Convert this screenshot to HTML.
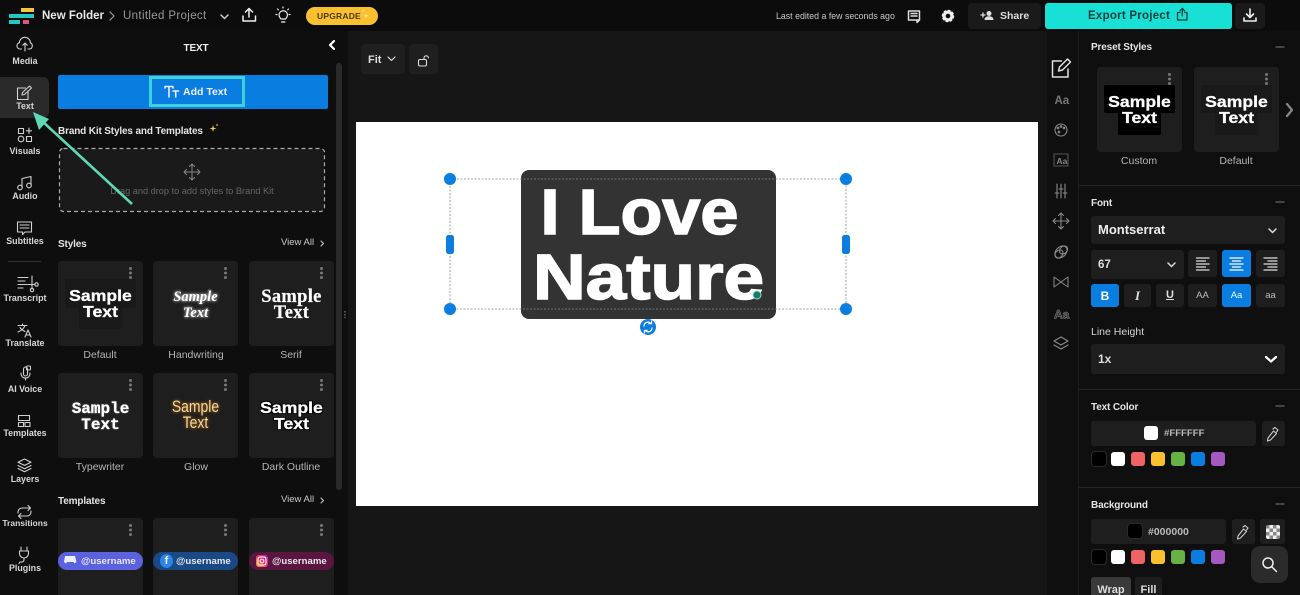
<!DOCTYPE html>
<html><head><meta charset="utf-8"><style>
html,body{margin:0;padding:0;width:1300px;height:595px;overflow:hidden;background:#161617}
body{position:relative;font-family:"Liberation Sans","Noto Sans CJK JP",sans-serif;color:#ddd}
.b,.t{position:absolute}
.t{white-space:nowrap;line-height:14px;height:14px}
.c{text-align:center;transform:translateX(-50%)}
.rl{font-size:8.9px;font-weight:700;color:#d8d8d8;left:25px;transform:translateX(-50%)}
.h{font-size:10px;letter-spacing:-.15px;font-weight:700;color:#e4e4e4;margin-top:1.5px}
.lb{font-size:10.5px;color:#b5b5b5;transform:translateX(-50%)}
.card{position:absolute;width:85px;height:85px;background:#1e1e1f;border-radius:4px}
.s{position:absolute;left:0;width:85px;text-align:center;white-space:nowrap;color:#fff;font-weight:700;font-size:16px;line-height:16px;top:26px;transform:scaleX(1.1);-webkit-text-stroke:.3px #fff}
.dots{position:absolute;right:11px;top:6px;width:3px;height:3px;background:#777;border-radius:50%;box-shadow:0 4.5px #777,0 9px #777}
.f{position:absolute;background:#1e1e1f;border-radius:3px}
.blue{background:#0a7ee0}
.sw{position:absolute;width:14px;height:14px;border-radius:3px}
.pill{position:absolute;left:0;width:85px;height:18px;top:34px;border-radius:9px;font-size:9.6px;font-weight:700;line-height:19px;color:#e8e8f0;white-space:nowrap}
.big{position:absolute;left:0;width:255px;text-align:center;color:#fff;font-weight:700;font-size:64px;line-height:65px;white-space:nowrap;-webkit-text-stroke:1.5px #fff}
</style></head><body>

<!-- regions -->
<div class="b" style="left:0;top:0;width:1300px;height:31px;background:#0c0c0d"></div>
<div class="b" style="left:0;top:31px;width:348px;height:564px;background:#0e0e0f"></div>
<div class="b" style="left:1047px;top:31px;width:253px;height:564px;background:#0f0f10"></div>
<div class="b" style="left:1078px;top:31px;width:1px;height:564px;background:#1c1c1d"></div>
<div class="b" style="left:356px;top:122px;width:682px;height:384px;background:#fff"></div>

<!-- top bar -->
<div class="b" style="left:21px;top:8px;width:13px;height:4px;background:#f3c63a"></div>
<div class="b" style="left:9px;top:14px;width:25px;height:4px;background:#25c8c0"></div>
<div class="b" style="left:9px;top:20px;width:11px;height:4px;background:#25c8c0"></div>
<div class="b" style="left:23px;top:20px;width:6px;height:4px;background:#e0527f"></div>
<div class="t" style="left:42px;top:9px;font-size:11.5px;font-weight:700;color:#e8e8e8">New Folder</div>
<div class="t" style="left:123px;top:9px;font-size:11.5px;color:#999;letter-spacing:.35px">Untitled Project</div>
<div class="b" style="left:306px;top:7px;width:72px;height:18px;background:#fbc02d;border-radius:9px"></div>
<div class="t" style="left:317px;top:9px;font-size:8.5px;font-weight:700;color:#4a3a08;letter-spacing:.2px">UPGRADE</div>
<div class="t" style="left:776px;top:9px;font-size:8.8px;color:#c8c8c8">Last edited a few seconds ago</div>
<div class="b" style="left:968px;top:3px;width:73px;height:26px;background:#1a1a1b;border-radius:4px"></div>
<div class="t" style="left:1000px;top:9px;font-size:10.5px;font-weight:700;color:#ddd">Share</div>
<div class="b" style="left:1045px;top:3px;width:187px;height:26px;background:#19e0d4;border-radius:3px"></div>
<div class="t" style="left:1088px;top:9px;font-size:11.5px;font-weight:700;color:#083f3f;letter-spacing:.25px">Export Project</div>
<div class="b" style="left:1235px;top:3px;width:30px;height:26px;background:#1a1a1b;border-radius:4px"></div>

<!-- left rail -->
<div class="b" style="left:0;top:77px;width:49px;height:41px;background:#2a2a2b;border-radius:0 6px 6px 0"></div>
<div class="b" style="left:8px;top:261px;width:33px;height:1px;background:#333"></div>
<div class="t rl" style="top:54px">Media</div>
<div class="t rl" style="top:99px">Text</div>
<div class="t rl" style="top:144px">Visuals</div>
<div class="t rl" style="top:189px">Audio</div>
<div class="t rl" style="top:234px">Subtitles</div>
<div class="t rl" style="top:291px">Transcript</div>
<div class="t rl" style="top:336px">Translate</div>
<div class="t rl" style="top:382px">AI Voice</div>
<div class="t rl" style="top:426px">Templates</div>
<div class="t rl" style="top:472px">Layers</div>
<div class="t rl" style="top:516px;font-size:8.5px">Transitions</div>
<div class="t rl" style="top:561px">Plugins</div>

<!-- left panel -->
<div class="t c h" style="left:196px;top:40px;color:#eee">TEXT</div>
<div class="b" style="left:336px;top:63px;width:6px;height:427px;background:#2a2a2b;border-radius:3px"></div>
<div class="b" style="left:58px;top:75px;width:270px;height:34px;background:#0a7ee0;border-radius:2px"></div>
<div class="b" style="left:149px;top:76px;width:90px;height:25px;border:3px solid #3fd0dc"></div>
<div class="t" style="left:183px;top:85px;font-size:10.5px;font-weight:700;color:#eef">Add Text</div>
<div class="t h" style="left:58px;top:123px">Brand Kit Styles and Templates</div>
<div class="b" style="left:60px;top:149px;width:264px;height:62px;background:#1a1a1b;border-radius:4px"></div>
<div class="t c" style="left:192px;top:184px;font-size:9.2px;color:#666">Drag and drop to add styles to Brand Kit</div>
<div class="t h" style="left:58px;top:236px">Styles</div>
<div class="t" style="left:281px;top:236px;font-size:9.5px;color:#ccc">View All</div>
<div class="t h" style="left:58px;top:493px">Templates</div>
<div class="t" style="left:281px;top:493px;font-size:9.5px;color:#ccc">View All</div>

<div class="card" style="left:58px;top:261px"><div class="b" style="left:7px;top:18px;width:71px;height:29px;background:#191919"></div><div class="b" style="left:21px;top:47px;width:43px;height:21px;background:#191919"></div><div class="dots"></div><div class="s" style="top:28px">Sample<br>Text</div></div>
<div class="card" style="left:153px;top:261px"><div class="dots"></div><div class="s" style="font-family:'Liberation Serif',serif;font-style:italic;font-size:14.5px;top:28px;line-height:16px;text-shadow:0 0 3px #fff;transform:none;-webkit-text-stroke:0">Sample<br>Text</div></div>
<div class="card" style="left:249px;top:261px"><div class="dots"></div><div class="s" style="font-family:'Liberation Serif',serif;font-size:18.5px;letter-spacing:.3px;top:28px;transform:none;-webkit-text-stroke:.2px #fff">Sample<br>Text</div></div>
<div class="t lb" style="left:100px;top:348px">Default</div>
<div class="t lb" style="left:196px;top:348px">Handwriting</div>
<div class="t lb" style="left:291px;top:348px">Serif</div>

<div class="card" style="left:58px;top:373px"><div class="dots"></div><div class="s" style="font-family:'Liberation Mono',monospace;font-size:16px;top:28px;transform:none;text-shadow:0 0 2px #666">Sample<br>Text</div></div>
<div class="card" style="left:153px;top:373px"><div class="dots"></div><div class="s" style="font-weight:400;font-size:17px;color:#f5d8a0;top:26px;transform:scaleX(.82);-webkit-text-stroke:0;text-shadow:0 0 4px #c87a10">Sample<br>Text</div></div>
<div class="card" style="left:249px;top:373px"><div class="dots"></div><div class="s" style="top:28px;text-shadow:1px 1px 0 #000,-1px 1px 0 #000,1px -1px 0 #000,-1px -1px 0 #000">Sample<br>Text</div></div>
<div class="t lb" style="left:100px;top:460px">Typewriter</div>
<div class="t lb" style="left:196px;top:460px">Glow</div>
<div class="t lb" style="left:291px;top:460px">Dark Outline</div>

<div class="card" style="left:58px;top:518px;height:77px;border-radius:4px 4px 0 0"><div class="dots"></div><div class="pill" style="background:#5a62e0;text-indent:23px">@username</div></div>
<div class="card" style="left:153px;top:518px;height:77px;border-radius:4px 4px 0 0"><div class="dots"></div><div class="pill" style="background:#1a4a85;text-indent:23px">@username</div><div class="b" style="left:7px;top:36px;width:13px;height:14px;border-radius:50%;background:#2a86e8;color:#fff;font-size:11px;font-weight:700;line-height:15px;text-align:center">f</div></div>
<div class="card" style="left:249px;top:518px;height:77px;border-radius:4px 4px 0 0"><div class="dots"></div><div class="pill" style="background:#5a1540;text-indent:23px">@username</div><div class="b" style="left:7px;top:37px;width:12px;height:12px;border-radius:3px;background:linear-gradient(45deg,#f9b233,#e8306e 55%,#a02cc0)"></div></div>

<!-- canvas toolbar -->
<div class="b" style="left:361px;top:44px;width:44px;height:30px;background:#1f1f20;border-radius:4px"></div>
<div class="t" style="left:368px;top:53px;font-size:11px;font-weight:700;color:#ddd">Fit</div>
<div class="b" style="left:409px;top:44px;width:29px;height:30px;background:#1f1f20;border-radius:4px"></div>

<!-- text object -->
<div class="b" style="left:521px;top:170px;width:255px;height:149px;background:#333;border-radius:8px;overflow:hidden">
<div class="big" style="top:10px;transform:translateX(-9px) scaleX(1.07)">I Love</div>
<div class="big" style="top:75px;transform:scaleX(1.14)">Nature</div>
</div>

<!-- right panel -->
<div class="t h" style="left:1091px;top:39px">Preset Styles</div>
<div class="card" style="left:1097px;top:67px"><div class="b" style="left:7px;top:18px;width:71px;height:28px;background:#000;border-radius:2px"></div><div class="b" style="left:21px;top:46px;width:43px;height:22px;background:#000;border-radius:2px"></div><div class="dots"></div><div class="s" style="top:28px">Sample<br>Text</div></div>
<div class="card" style="left:1194px;top:67px"><div class="b" style="left:7px;top:18px;width:71px;height:28px;background:#191919"></div><div class="b" style="left:21px;top:46px;width:43px;height:22px;background:#191919"></div><div class="dots"></div><div class="s" style="top:28px">Sample<br>Text</div></div>
<div class="t lb" style="left:1139px;top:154px">Custom</div>
<div class="t lb" style="left:1236px;top:154px">Default</div>
<div class="b" style="left:1079px;top:185px;width:221px;height:1px;background:#252526"></div>
<div class="t h" style="left:1091px;top:195px">Font</div>
<div class="f" style="left:1091px;top:216px;width:194px;height:28px"></div>
<div class="t" style="left:1098px;top:223px;font-size:13px;font-weight:700;color:#eee">Montserrat</div>
<div class="f" style="left:1091px;top:250px;width:93px;height:29px"></div>
<div class="t" style="left:1098px;top:258px;font-size:11.5px;font-weight:700;color:#ddd">67</div>
<div class="f" style="left:1188px;top:250px;width:29px;height:27px"></div>
<div class="f blue" style="left:1222px;top:250px;width:29px;height:27px"></div>
<div class="f" style="left:1256px;top:250px;width:29px;height:27px"></div>
<div class="f blue" style="left:1091px;top:284px;width:28px;height:23px;color:#fff;font-weight:700;font-size:12px;line-height:24px;text-align:center">B</div>
<div class="f" style="left:1124px;top:284px;width:27px;height:23px;color:#ddd;font-weight:700;font-style:italic;font-size:13px;line-height:24px;text-align:center;font-family:'Liberation Serif',serif">I</div>
<div class="f" style="left:1156px;top:284px;width:28px;height:23px;color:#ddd;font-weight:700;font-size:11px;line-height:23px;text-align:center;text-decoration:underline">U</div>
<div class="f" style="left:1188px;top:284px;width:29px;height:23px;color:#bbb;font-size:9.5px;line-height:23px;text-align:center">AA</div>
<div class="f blue" style="left:1222px;top:284px;width:29px;height:23px;color:#dff;font-size:9.5px;line-height:23px;text-align:center">Aa</div>
<div class="f" style="left:1256px;top:284px;width:29px;height:23px;color:#bbb;font-size:9.5px;line-height:23px;text-align:center">aa</div>
<div class="t h" style="left:1091px;top:323.5px;font-weight:400;font-size:10.5px;letter-spacing:0;color:#d5d5d5">Line Height</div>
<div class="f" style="left:1091px;top:344px;width:194px;height:30px"></div>
<div class="t" style="left:1098px;top:352px;font-size:12px;font-weight:700;color:#ddd">1x</div>
<div class="b" style="left:1079px;top:389px;width:221px;height:1px;background:#252526"></div>
<div class="t h" style="left:1091px;top:399px">Text Color</div>
<div class="f" style="left:1091px;top:421px;width:165px;height:25px"></div>
<div class="sw" style="left:1144px;top:426px;background:#fff"></div>
<div class="t" style="left:1164px;top:427px;font-size:9.6px;font-weight:700;color:#bbb">#FFFFFF</div>
<div class="f" style="left:1262px;top:421px;width:23px;height:25px"></div>
<div class="sw" style="left:1092px;top:452px;background:#000;box-shadow:0 0 0 1px #2a2a2a"></div>
<div class="sw" style="left:1111px;top:452px;background:#fff"></div>
<div class="sw" style="left:1131px;top:452px;background:#ee6464"></div>
<div class="sw" style="left:1151px;top:452px;background:#fbc02d"></div>
<div class="sw" style="left:1171px;top:452px;background:#66b245"></div>
<div class="sw" style="left:1191px;top:452px;background:#0a7ee0"></div>
<div class="sw" style="left:1211px;top:452px;background:#a558c0"></div>
<div class="b" style="left:1079px;top:487px;width:221px;height:1px;background:#252526"></div>
<div class="t h" style="left:1091px;top:497px">Background</div>
<div class="f" style="left:1091px;top:519px;width:135px;height:25px"></div>
<div class="sw" style="left:1128px;top:524px;background:#000;box-shadow:0 0 0 1px #2a2a2a"></div>
<div class="t" style="left:1148px;top:525px;font-size:10.5px;font-weight:700;color:#bbb">#000000</div>
<div class="f" style="left:1232px;top:519px;width:23px;height:25px"></div>
<div class="f" style="left:1260px;top:519px;width:25px;height:25px"></div>
<div class="b" style="left:1266px;top:525px;width:14px;height:14px;border-radius:2px;background:repeating-conic-gradient(#eee 0 25%,#888 0 50%) 0 0/7px 7px"></div>
<div class="sw" style="left:1092px;top:550px;background:#000;box-shadow:0 0 0 1px #2a2a2a"></div>
<div class="sw" style="left:1111px;top:550px;background:#fff"></div>
<div class="sw" style="left:1131px;top:550px;background:#ee6464"></div>
<div class="sw" style="left:1151px;top:550px;background:#fbc02d"></div>
<div class="sw" style="left:1171px;top:550px;background:#66b245"></div>
<div class="sw" style="left:1191px;top:550px;background:#0a7ee0"></div>
<div class="sw" style="left:1211px;top:550px;background:#a558c0"></div>
<div class="f" style="left:1091px;top:577px;width:40px;height:18px;background:#3a3a3b;font-size:11px;font-weight:700;color:#ddd;text-align:center;line-height:27px;border-radius:3px 3px 0 0;overflow:hidden">Wrap</div>
<div class="f" style="left:1135px;top:577px;width:27px;height:18px;font-size:11px;font-weight:700;color:#ddd;text-align:center;line-height:27px;border-radius:3px 3px 0 0;overflow:hidden">Fill</div>
<div class="b" style="left:1251px;top:546px;width:37px;height:37px;background:#2b2b2c;border-radius:9px"></div>

<!-- icons & overlays -->
<svg class="b" style="left:0;top:0" width="1300" height="595" viewBox="0 0 1300 595" fill="none" stroke-linecap="round" stroke-linejoin="round">
<!-- topbar icons -->
<g stroke="#999" stroke-width="1.2"><path d="M110 12l4 4-4 4"/></g>
<g stroke="#ccc" stroke-width="1.5"><path d="M221 15l3.500 3.500 3.500-3.500"/></g>
<g stroke="#eee" stroke-width="1.5"><path d="M249 17V9M245.500 12l3.500-3.500 3.500 3.500M243 16v5h12.500v-5"/></g>
<g stroke="#eee" stroke-width="1.200"><path d="M281 19c-.8-1-2-2-2-4a4.200 4.200 0 0 1 8.500 0c0 2-1.200 3-2 4zM281.500 22h3.500M283 7v1M277.500 9l.8.8M288.500 9l-.8.8M276 14.500h1M289 14.500h1"/></g>
<path d="M366 13l.7 2 2 .7-2 .7-.7 2-.7-2-2-.7 2-.7z" fill="#ffe98a"/>
<path d="M363 9l.4 1.200 1.200.4-1.200.4-.4 1.200-.4-1.200-1.200-.4 1.200-.4z" fill="#ffe98a"/>
<g stroke="#ddd" stroke-width="1.500"><path d="M908.500 11h11v9h-11zM911 13.500h6M911 16h6M917 20v2.500l2.500-2.500"/></g>
<circle cx="948" cy="16" r="3.800" stroke="#eee" stroke-width="3"/>
<circle cx="948" cy="16" r="5.500" stroke="#eee" stroke-width="1.500" stroke-dasharray="2 2.300"/>
<g fill="#ddd"><circle cx="989" cy="13.500" r="2.500"/><path d="M984.500 20c0-2.800 2-3.800 4.500-3.800s4.500 1 4.500 3.800z"/></g>
<path d="M981 15h4M983 13v4" stroke="#ddd" stroke-width="1.300"/>
<g stroke="#083f3f" stroke-width="1.300"><path d="M1180 12.500h-2.500v7.500h9.500v-7.500h-2.500M1182.300 16V9M1180 10.800l2.300-2.300 2.300 2.300"/></g>
<g stroke="#eee" stroke-width="1.600"><path d="M1250 9v8M1246.500 14l3.500 3.500 3.500-3.500M1244 18v3h12v-3"/></g>
<!-- rail icons -->
<g stroke="#d0d0d0" stroke-width="1.100">
<path d="M21.500 49H20a3.200 3.200 0 0 1-.6-6.300 5.500 5.500 0 0 1 11 .2 3.200 3.200 0 0 1-.9 6.100H28M25 51v-8M22.800 45.200l2.200-2.200 2.200 2.200"/>
<path d="M28 91v8.500H17.500V88h8M22 95l.5-2.500 7-6.500 2 2-7 6.500z"/>
<rect x="18.500" y="128.500" width="5" height="5"/><path d="M29 128v5.500M26.500 130.800h5"/><circle cx="21" cy="139" r="2.800"/><rect x="26.500" y="136.500" width="5" height="5"/>
<path d="M22 187v-8.500l9-2v8.500"/><circle cx="20" cy="187.500" r="2.300"/><circle cx="29" cy="185.500" r="2.300"/>
<path d="M17.500 222h14v10h-6.500l-2.500 2.500v-2.500h-5zM20 225h9M20 228h9"/>
<path d="M18 277.500h10M18 281h7M18 284.500h9M18 288h5M32 276v13"/><circle cx="32" cy="290" r="1.700"/><circle cx="36.500" cy="284.500" r="1.700"/><path d="M28 284.500h7"/>
<path d="M18 325.500h9M22.500 324v1.500M25 325.500c-1 3-3.500 5-7 6.500M20 327.500c1 2 3 3 5 4M25 337l3-7 3 7M26 335h4"/>
<path d="M23.500 369a2 2 0 0 1 4 0v5a2 2 0 0 1-4 0zM21 373c0 3.500 2 5 4.500 5s4.500-1.500 4.500-5M25.500 378v2"/><rect x="26.500" y="366" width="4" height="4" rx="1"/>
<rect x="18.500" y="415.500" width="11" height="5"/><rect x="18.500" y="422.500" width="5" height="4"/><rect x="25" y="422.500" width="5" height="4"/>
<path d="M24.500 459l6.500 3.200-6.500 3.200-6.500-3.200zM18 465.500l6.500 3.200 6.500-3.200M18 468.500l6.500 3.200 6.500-3.200"/>
<path d="M18 513v-1a4 4 0 0 1 4-4h8.500M28 505.500l2.500 2.500-2.500 2.500M31 511v1a4 4 0 0 1-4 4h-8.500M21 513.500l-2.500 2.500 2.500 2.500"/>
<path d="M21 551v-4M27 551v-4M19.500 551h9v2.500a4.500 4.500 0 0 1-9 0zM24 558v1.500c0 1.500-1 2.500-2.500 2.500H20l-1 1.500"/>
</g>
<path d="M334 41l-4 4 4 4" stroke="#fff" stroke-width="2.200"/>
<!-- add text icon -->
<g stroke="#eef" stroke-width="1.600"><path d="M165 88v-1.500h8V88M169 86.500V97M173 91h5.500M175.700 91v6"/></g>
<path d="M213 125l.8 2.700 2.700.8-2.700.8-.8 2.700-.8-2.700-2.700-.8 2.700-.8zM217 123.500l.4 1.100 1.100.4-1.100.4-.4 1.100-.4-1.100-1.100-.4 1.100-.4z" fill="#f0d060"/>
<rect x="59.500" y="148.500" width="265" height="63" rx="4" stroke="#aaa" stroke-width="1.200" stroke-dasharray="4 3" stroke-linecap="butt"/>
<g stroke="#888" stroke-width="1"><path d="M192 164v16M184 172h16M189.500 166.500l2.500-2.500 2.500 2.500M189.500 177.500l2.500 2.500 2.500-2.500M186.500 169.500l-2.500 2.500 2.500 2.500M197.500 169.500l2.500 2.500-2.500 2.500"/></g>
<g stroke="#ccc" stroke-width="1"><path d="M321 241l2.500 2.500-2.500 2.500M321 498l2.500 2.500-2.500 2.500"/></g>
<!-- discord -->
<path d="M65 556h10l1.500 6-2 1.500-1-1.500h-6.500l-1 1.500-2-1.500z" fill="#eef"/>
<rect x="258" y="557" width="8" height="8" rx="2" stroke="#fff" stroke-width="1"/><circle cx="262" cy="561" r="1.800" stroke="#fff" stroke-width="1"/>
<!-- canvas -->
<path d="M388 57l3.500 3.500 3.500-3.500" stroke="#ddd" stroke-width="1.200"/>
<g stroke="#ddd" stroke-width="1.100"><rect x="418.500" y="59.500" width="8" height="6.500" rx="1.500"/><path d="M424 59.500v-1.500a2.200 2.200 0 0 1 4.400 0"/></g>
<path d="M345 311v7" stroke="#555" stroke-width="2" stroke-dasharray="1.500 1.500" stroke-linecap="butt"/>
<!-- selection -->
<rect x="450" y="179" width="396" height="130" stroke="#888" stroke-width=".8" stroke-dasharray="2 1.500" stroke-linecap="butt"/>
<g fill="#0a7ee0"><circle cx="450" cy="179" r="6"/><circle cx="846" cy="179" r="6"/><circle cx="450" cy="309" r="6"/><circle cx="846" cy="309" r="6"/><rect x="446" y="235" width="8" height="19" rx="2.500"/><rect x="842" y="235" width="8" height="19" rx="2.500"/><circle cx="648" cy="327" r="8"/></g>
<path d="M644 326a4 4 0 0 1 7-2.500M652 328a4 4 0 0 1-7 2.500M651.500 321v2.700h-2.700M644.500 333v-2.700h2.700" stroke="#fff" stroke-width="1.200"/>
<circle cx="757" cy="295" r="4" fill="#1a7a6a" stroke="#8fdccb" stroke-width="1"/>
<!-- right rail -->
<g stroke="#e0e0e0" stroke-width="1.500"><path d="M1068 69v8h-15.500v-16h9M1058.500 71l1-4 8-8 3 3-8 8z"/></g>
<g stroke="#888" stroke-width="1.100">
<circle cx="1061" cy="130" r="6"/><circle cx="1058" cy="128" r=".8"/><circle cx="1061" cy="126.500" r=".8"/><circle cx="1064" cy="128" r=".8"/><circle cx="1059" cy="132" r=".8"/>
<rect x="1054" y="154" width="14" height="12" stroke="#555"/>
<path d="M1057 184v14M1061 184v14M1065 184v14M1055 193h4M1059 189h4M1063 193h4"/>
<path d="M1061 213v16M1053 221h16M1058.500 215.500l2.500-2.500 2.500 2.500M1058.500 226.500l2.500 2.500 2.500-2.500M1055.500 218.500l-2.500 2.500 2.500 2.500M1066.500 218.500l2.500 2.500-2.500 2.500"/>
<ellipse cx="1059" cy="254" rx="4.500" ry="3.500" transform="rotate(-45 1059 254)"/><ellipse cx="1063.500" cy="250" rx="4.500" ry="3.500" transform="rotate(-45 1063.500 250)"/><ellipse cx="1061" cy="252" rx="7" ry="5" transform="rotate(-45 1061 252)"/>
<path d="M1054 277v10l14-10v10zM1054 277l14 10" stroke-width="1"/>
<path d="M1054 341l7-4 7 4-7 4zM1054 345l7 4 7-4" stroke-width="1.200"/>
</g>
<text x="1054.500" y="104" font-family="Liberation Sans" font-size="11.500" font-weight="700" fill="#777">Aa</text>
<text x="1056.500" y="164" font-family="Liberation Sans" font-size="8.500" font-weight="700" fill="#888">Aa</text>
<text x="1054" y="318.500" font-family="Liberation Sans" font-size="12" font-weight="700" fill="#333" stroke="#777" stroke-width=".6">Aa</text>
<path d="M1276 47h8M1276 202h8M1276 406h8M1276 504h8" stroke="#666" stroke-width="1.200"/>
<path d="M1287 104l5 6-5 6" stroke="#888" stroke-width="2.200"/>
<path d="M1269 229l3.500 3.500 3.500-3.500M1168 263l3.500 3.500 3.500-3.500" stroke="#ddd" stroke-width="1.500"/>
<path d="M1266 357l5 4.500 5-4.500" stroke="#fff" stroke-width="2.200"/>
<g stroke="#ddd" stroke-width="1.300"><path d="M1196.500 258h12.500M1196.500 261h9M1196.500 264h12.500M1196.500 267h9M1196.500 270h12.500"/></g>
<g stroke="#fff" stroke-width="1.300"><path d="M1230 258h13M1232.500 261h8M1230 264h13M1232.500 267h8M1230 270h13"/></g>
<g stroke="#ddd" stroke-width="1.300"><path d="M1264 258h13M1268 261h9M1264 264h13M1268 267h9M1264 270h13"/></g>
<g stroke="#ccc" stroke-width="1.100"><path d="M1268 438l5.500-7 3 2.500-6 6.500-3 1zM1273 429l2-1.500 3 2.500-1.500 2"/><path d="M1238 536l5.500-7 3 2.500-6 6.500-3 1zM1243 527l2-1.500 3 2.500-1.500 2"/></g>
<circle cx="1268" cy="563" r="5" stroke="#eee" stroke-width="1.500"/><path d="M1272 567l4.500 4.500" stroke="#eee" stroke-width="1.500"/>
<!-- arrow -->
<path d="M132 204L42 121" stroke="#5fd8b5" stroke-width="2.600" stroke-linecap="butt"/>
<path d="M33 112L49 119 39 130z" fill="#5fd8b5"/>
</svg>
</body></html>
